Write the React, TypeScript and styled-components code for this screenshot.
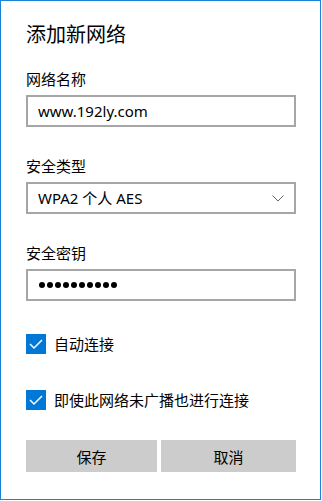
import React from 'react';
import styled, { createGlobalStyle } from 'styled-components';

const GlobalStyle = createGlobalStyle`
  body {
    margin: 0;
    background: #ffffff;
    font-family: "Noto Sans", "Noto Sans CJK SC", sans-serif;
    color: #000000;
  }
`;

const Window = styled.div`
  box-sizing: border-box;
  width: 321px;
  height: 500px;
  border: 1px solid #1883d7;
  padding: 20px 24px 0 25px;
  display: flex;
  flex-direction: column;
`;

const Title = styled.h1`
  margin: 0 0 20px;
  font-size: 20px;
  line-height: 28px;
  font-weight: 400;
`;

const Field = styled.div<{ $top?: number }>`
  display: flex;
  flex-direction: column;
  gap: 6px;
  margin-top: ${p => p.$top ?? 0}px;
`;

const Label = styled.label`
  font-size: 15px;
  line-height: 20px;
`;

const Box = styled.div`
  box-sizing: border-box;
  height: 32px;
  border: 2px solid #a6a6a6;
  background: #ffffff;
  display: flex;
  align-items: center;
  padding: 0 10px;
  font-size: 15px;
`;

const Value = styled.span`
  flex: 1;
  line-height: 20px;
`;

const Dots = styled.div`
  display: flex;
  gap: 2px;
  padding-left: 1px;
`;

const Dot = styled.span`
  width: 6px;
  height: 6px;
  border-radius: 50%;
  background: #000000;
`;

const CheckRow = styled.div<{ $top: number }>`
  display: flex;
  align-items: center;
  gap: 8px;
  margin-top: ${p => p.$top}px;
  font-size: 15px;
  line-height: 20px;
`;

const CheckBox = styled.span`
  width: 20px;
  height: 20px;
  background: #0078d7;
  display: flex;
  align-items: center;
  justify-content: center;
`;

const Buttons = styled.div`
  display: grid;
  grid-template-columns: 131px 1fr;
  gap: 4px;
  margin-top: 30px;
`;

const Button = styled.button`
  height: 32px;
  border: none;
  background: #cccccc;
  font-family: inherit;
  font-size: 15px;
  color: #000000;
  padding: 0;
`;

const Check = () => (
  <CheckBox>
    <svg width="20" height="20" viewBox="0 0 20 20">
      <polyline points="4,10 8,14 16,6" fill="none" stroke="#ffffff" strokeWidth="1.5" />
    </svg>
  </CheckBox>
);

export default function App() {
  return (
    <>
      <GlobalStyle />
      <Window>
        <Title>添加新网络</Title>
        <Field>
          <Label>网络名称</Label>
          <Box><Value>www.192ly.com</Value></Box>
        </Field>
        <Field $top={29}>
          <Label>安全类型</Label>
          <Box>
            <Value>WPA2 个人 AES</Value>
            <svg width="12" height="7" viewBox="0 0 12 7" style={{ marginRight: 0 }}>
              <polyline points="0.5,0.5 6,6 11.5,0.5" fill="none" stroke="#666666" strokeWidth="1" />
            </svg>
          </Box>
        </Field>
        <Field $top={29}>
          <Label>安全密钥</Label>
          <Box>
            <Dots>
              {Array.from({ length: 10 }).map((_, i) => <Dot key={i} />)}
            </Dots>
          </Box>
        </Field>
        <CheckRow $top={33}>
          <Check />
          <span>自动连接</span>
        </CheckRow>
        <CheckRow $top={36}>
          <Check />
          <span>即使此网络未广播也进行连接</span>
        </CheckRow>
        <Buttons>
          <Button>保存</Button>
          <Button>取消</Button>
        </Buttons>
      </Window>
    </>
  );
}
